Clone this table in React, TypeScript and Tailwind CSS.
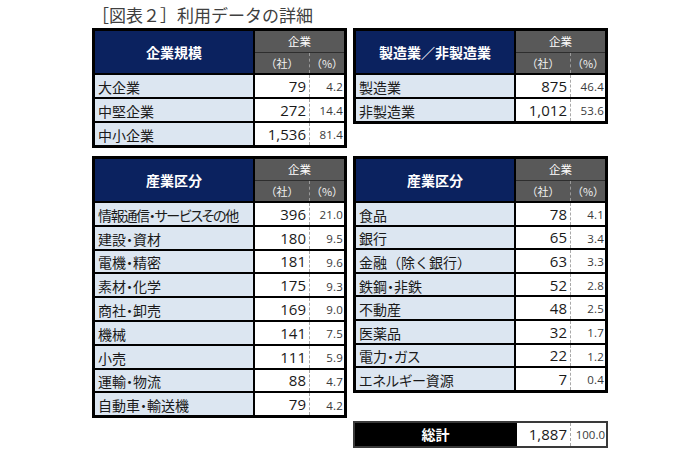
import React from 'react'

type Row = { label: string; count: string; pct: string; tight?: boolean; wide?: boolean }

const jp = "font-['Noto_Sans_CJK_JP','Noto_Sans',sans-serif]"
const palt = "[font-feature-settings:'palt']"
const num = "font-['Open_Sans','Liberation_Sans',sans-serif]"

const sizeRows: Row[] = [
  { label: '大企業', count: '79', pct: '4.2' },
  { label: '中堅企業', count: '272', pct: '14.4' },
  { label: '中小企業', count: '1,536', pct: '81.4' },
]

const mfgRows: Row[] = [
  { label: '製造業', count: '875', pct: '46.4' },
  { label: '非製造業', count: '1,012', pct: '53.6' },
]

const industryA: Row[] = [
  { label: '情報通信・サービスその他', count: '396', pct: '21.0', tight: true },
  { label: '建設・資材', count: '180', pct: '9.5' },
  { label: '電機・精密', count: '181', pct: '9.6' },
  { label: '素材・化学', count: '175', pct: '9.3' },
  { label: '商社・卸売', count: '169', pct: '9.0' },
  { label: '機械', count: '141', pct: '7.5' },
  { label: '小売', count: '111', pct: '5.9' },
  { label: '運輸・物流', count: '88', pct: '4.7' },
  { label: '自動車・輸送機', count: '79', pct: '4.2' },
]

const industryB: Row[] = [
  { label: '食品', count: '78', pct: '4.1' },
  { label: '銀行', count: '65', pct: '3.4' },
  { label: '金融（除く銀行）', count: '63', pct: '3.3', wide: true },
  { label: '鉄鋼・非鉄', count: '52', pct: '2.8' },
  { label: '不動産', count: '48', pct: '2.5' },
  { label: '医薬品', count: '32', pct: '1.7' },
  { label: '電力・ガス', count: '22', pct: '1.2' },
  { label: 'エネルギー資源', count: '7', pct: '0.4' },
]

function DataTable({ title, rows, rowH }: { title: string; rows: Row[]; rowH: string }) {
  return (
    <div className="w-[255px] border-[3px] border-black">
      {/* Header */}
      <div className="flex h-[42px]">
        <div
          className={`${jp} flex w-[160px] items-center justify-center border-r-2 border-black bg-[#0b225f] text-[14px] font-bold text-white`}
        >
          {title}
        </div>
        <div className="flex flex-1 flex-col bg-[#595959]">
          <div className={`${jp} flex h-[22px] items-center justify-center border-b border-[#2e2e2e] text-[11.5px] text-white`}>
            企業
          </div>
          <div className={`${jp} flex flex-1 text-[11px] text-[#f2f2f2]`}>
            <div className="flex w-[55px] items-center justify-center border-r border-dashed border-[#9a9a9a]">（社）</div>
            <div className="flex flex-1 items-center justify-center">（%）</div>
          </div>
        </div>
      </div>

      {/* Rows */}
      {rows.map((r) => (
        <div key={r.label} className={`flex border-t-2 border-black ${rowH}`}>
          <div
            className={`${jp} ${r.wide ? '' : palt} flex w-[160px] items-center border-r-2 border-black bg-[#dce6f1] pl-[3px] pt-[2px] text-[14px] leading-none whitespace-nowrap text-[#1a1a1a] ${
              r.tight ? 'tracking-[-1.3px]' : ''
            }`}
          >
            {r.label}
          </div>
          <div
            className={`${num} flex w-[55px] items-center justify-end border-r border-dashed border-[#a8a8a8] bg-white pr-[3px] pt-[1px] text-[15px] leading-none text-[#1a1a1a]`}
          >
            {r.count}
          </div>
          <div
            className={`${num} flex flex-1 items-center justify-end bg-white pr-[1px] pt-[2px] text-[11.5px] leading-none tracking-[0.2px] text-[#3a3a3a]`}
          >
            {r.pct}
          </div>
        </div>
      ))}
    </div>
  )
}

function TotalRow() {
  return (
    <div className="flex h-[27px] w-[255px] border-2 border-[#3a3a3a]">
      <div className={`${jp} flex w-[161px] items-center justify-center bg-black text-[14px] font-bold text-white`}>
        総計
      </div>
      <div
        className={`${num} flex w-[55px] items-center justify-end border-x border-black border-r-[#a8a8a8] [border-right-style:dashed] bg-white pr-[3px] pt-[1px] text-[15px] leading-none text-[#1a1a1a]`}
      >
        1,887
      </div>
      <div
        className={`${num} flex flex-1 items-center justify-end bg-white pr-[1px] pt-[1px] text-[11.5px] leading-none text-[#3a3a3a]`}
      >
        100.0
      </div>
    </div>
  )
}

export default function App() {
  return (
    <div className="h-[461px] w-[680px] overflow-hidden bg-white pl-[92px]">
      {/* Title */}
      <div className={`${jp} h-[28px] pt-[3px] text-[17px] leading-[24px] text-[#404040]`}>
        ［図表２］利用データの詳細
      </div>

      <div className="flex items-start gap-[6px]">
        <DataTable title="企業規模" rows={sizeRows} rowH="h-[24px]" />
        <DataTable title="製造業／非製造業" rows={mfgRows} rowH="h-[24px]" />
      </div>

      <div className="mt-[8px] flex items-start gap-[6px]">
        <DataTable title="産業区分" rows={industryA} rowH="h-[23.8px]" />
        <div className="flex flex-col gap-[28px]">
          <DataTable title="産業区分" rows={industryB} rowH="h-[23.6px]" />
          <TotalRow />
        </div>
      </div>
    </div>
  )
}
